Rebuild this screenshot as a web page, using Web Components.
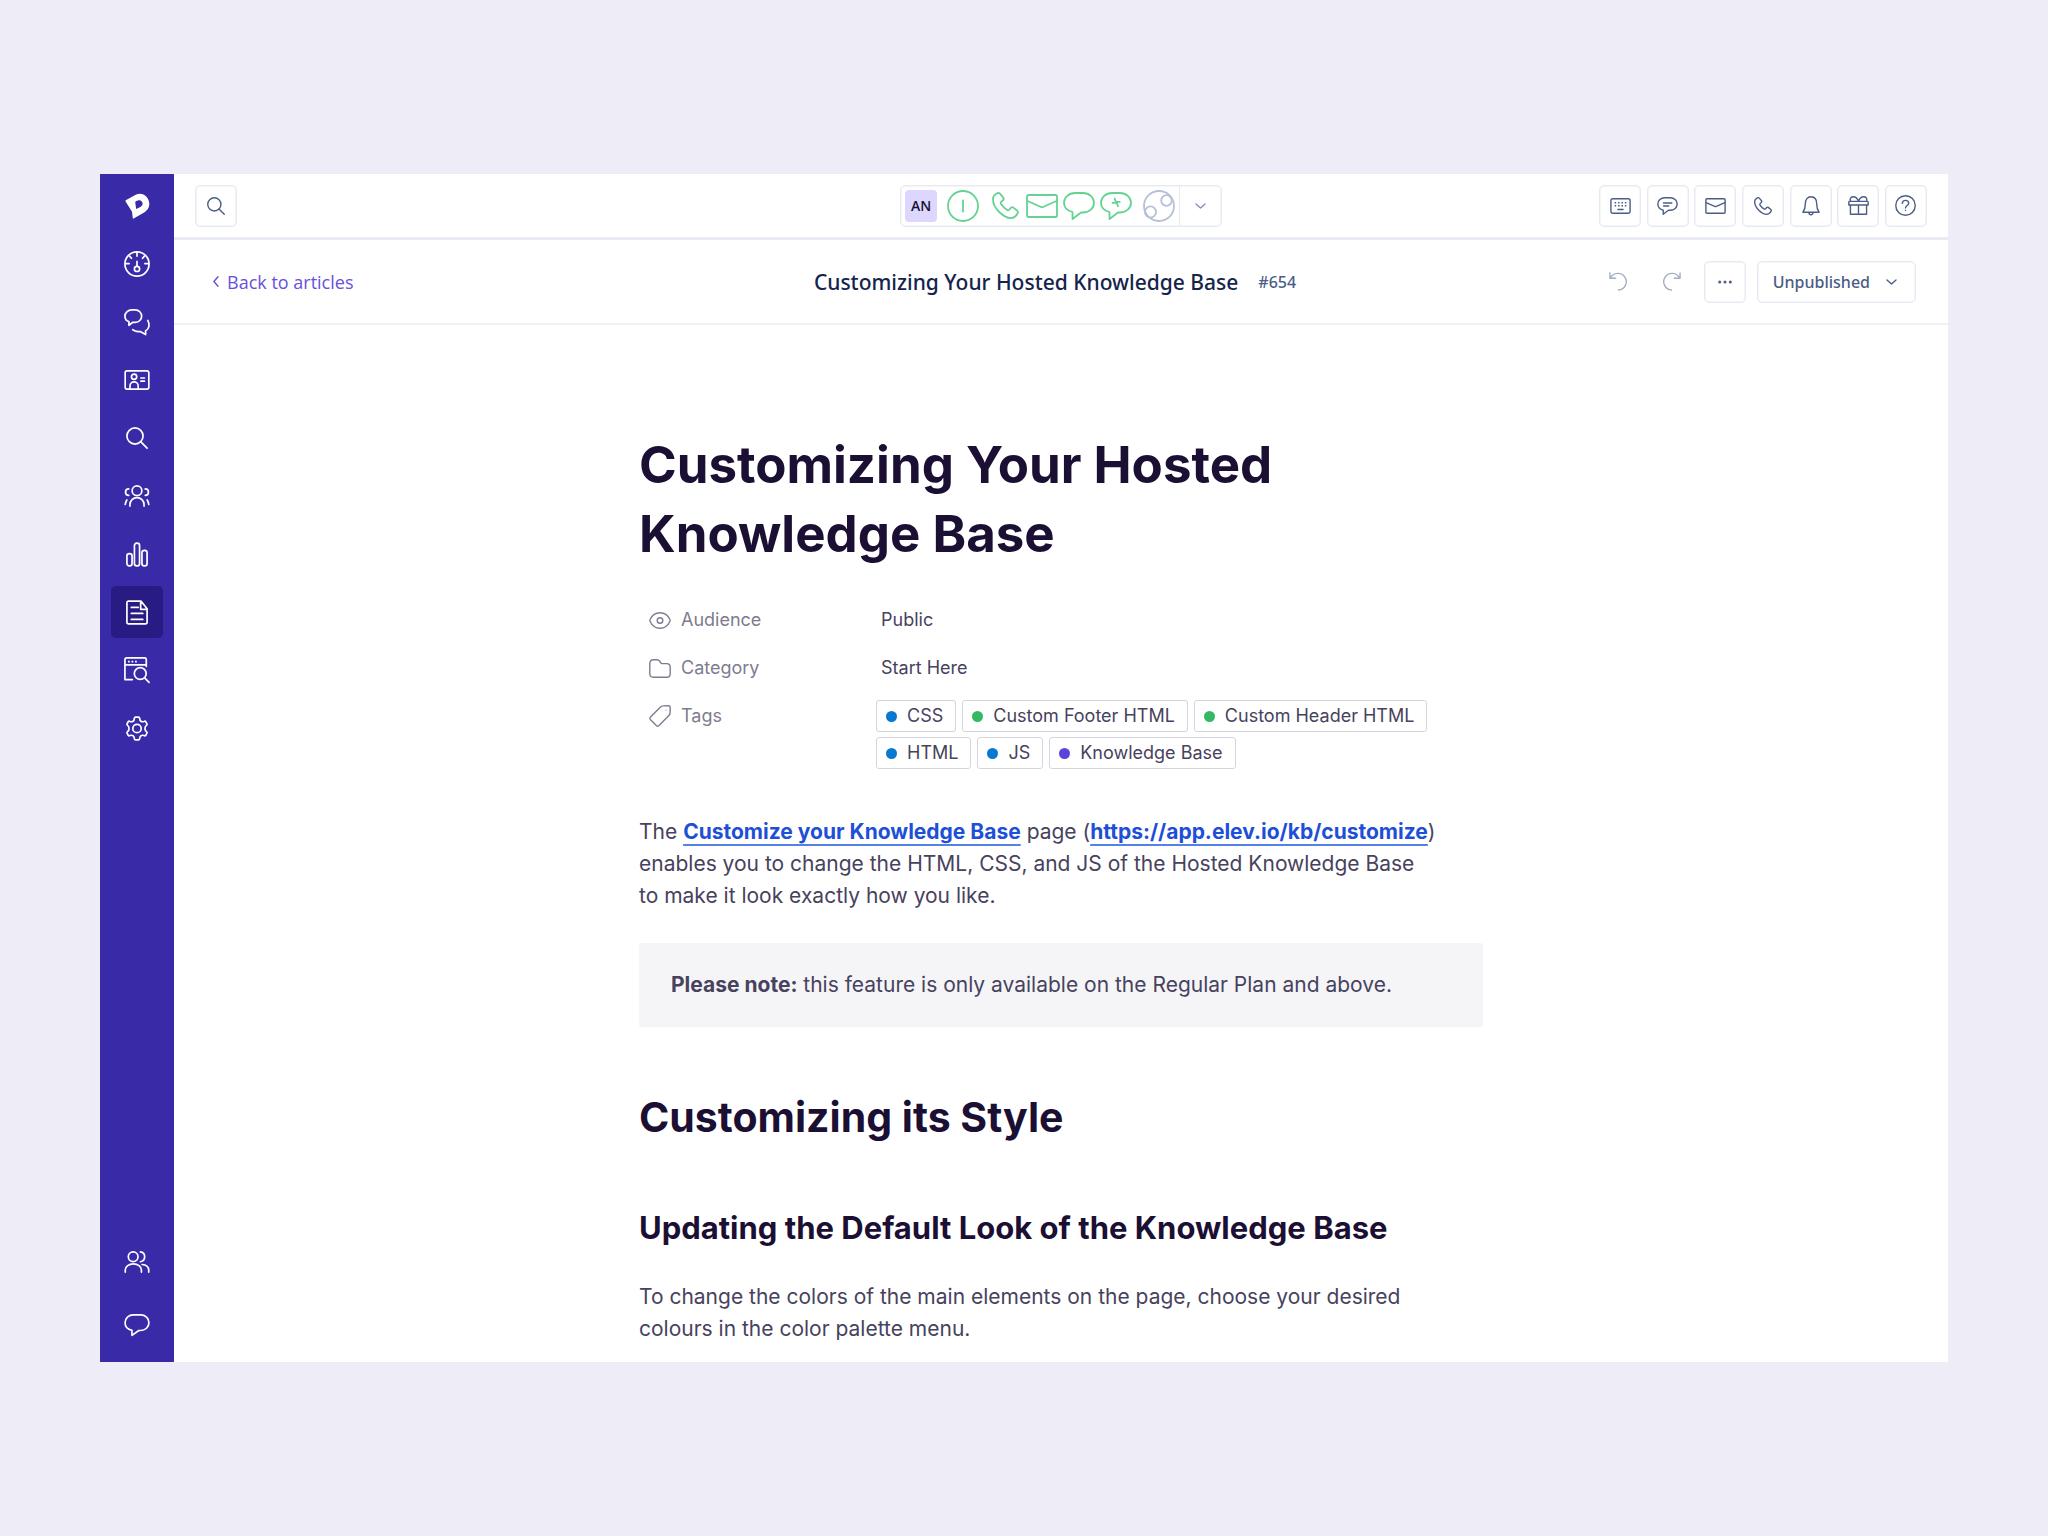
<!DOCTYPE html>
<html lang="en">
<head>
<meta charset="utf-8">
<title>Customizing Your Hosted Knowledge Base</title>
<style>
  html, body { height: 100%; }
  body {
    margin: 0; box-sizing: border-box; background: #eeecf7;
    padding: 174px 100px; font-family: Inter, sans-serif; color: #47425d;
    --line: #e7eaf3; --ink: #1b1033; --slate: #4b5d85; --brand: #392ba8;
  }
</style>
</head>
<body>
<kb-app></kb-app>

<script>
const ICONS = {
  logo: ['0 0 26 28', '<path fill="currentColor" stroke="none" fill-rule="evenodd" d="M.8 7.6 11.6 1.4C18.5-1.400 25.200 3.900 25.300 11.200C25.300 15.600 22.800 18.800 19 20.800L9 26.600Q8.300 27 8.100 26.200L7.300 19.400L.6 8.800Q.2 8 .8 7.600ZM10.600 9.200L11.600 16.500L16 14.600C18.500 13.300 19 10.800 17.500 8.900C16 7 13.300 7.300 10.600 9.200Z"/>'],
  gauge: ['0 0 28 28', '<circle cx="14" cy="14" r="13"/><path d="M14 1.500v4M1.500 13.500h4M22.500 13.500h4M6 5.500 8 7.800M22 5.500 20 7.800M14 11.200v5"/><circle cx="14" cy="19.300" r="2.800"/>'],
  chats: ['0 0 28 28', '<path d="M8.500 1h3.800C16 1 19 4 19 7.700s-3 6.600-6.700 6.600H9.500L5.300 17.500v-4C2.700 12.700 1 10.500 1 7.700 1 4 4 1 8.500 1Z"/><path d="M25.600 12.300c2.500 4.300 1.700 9-2.300 11.200v4l-5.900-3.200c-2.800.2-4 .1-6-.9-.7-.5-1.300-.8-2-1.100"/>'],
  card: ['0 0 28 22', '<rect x="1" y="1" width="26" height="20" rx="2"/><circle cx="10.800" cy="7.500" r="2.900"/><path d="M6.300 20.500v-3a4.500 4.500 0 0 1 9 0v3M18.200 8.800h4M18.200 12.300h4"/>'],
  search: ['0 0 24 24', '<circle cx="9.800" cy="9.800" r="8.800"/><path d="m16 16 7 7"/>'],
  team: ['0 0 28 24', '<circle cx="14" cy="6.300" r="5.300"/><path d="M6.300 23v-1.500a7.700 7.700 0 0 1 15.400 0V23M5 4.300a3.300 3.300 0 0 0 0 7M23 4.300a3.300 3.300 0 0 1 0 7M1.200 21.300c.2-2 .7-3.500 1.700-5M26.800 21.300c-.2-2-.7-3.500-1.700-5"/>'],
  bars: ['0 0 24 27', '<rect x="1" y="12.500" width="5.600" height="13.500" rx="2.600"/><rect x="9.200" y="1" width="5.600" height="25" rx="2.600"/><rect x="17.400" y="9" width="5.600" height="17" rx="2.600"/>'],
  doc: ['0 0 24 27', '<path d="M2.700 1h13.600L23 9.500v14.800a1.700 1.700 0 0 1-1.700 1.700H2.700A1.700 1.700 0 0 1 1 24.300V2.700A1.700 1.700 0 0 1 2.700 1ZM16 1v9h7M5.800 8h7.500M5.800 14.500h12.500M5.800 21h12.500"/>'],
  browse: ['0 0 28 28', '<path d="M9 24.300H1V3A2 2 0 0 1 3 1h19a2 2 0 0 1 2 2v7M1 8.500h23"/><path stroke-linecap="butt" stroke-dasharray="1.900 1.900" d="M4.300 5h9.500"/><circle cx="17.500" cy="17.800" r="6.400"/><path d="m22.200 22.500 4.800 4.800"/>'],
  gear: ['0 0 24 27', '<circle cx="12" cy="13.500" r="4.600"/><path d="M10.500 1h3c1 0 1.300.6 1.400 1.500.2 3 2.100 4.300 4.700 3.300.8-.4 1.600-.3 2 .3l1.100 2c.5.800.3 1.500-.4 2-2.200 1.700-2.200 5.100 0 6.800.7.500.9 1.200.4 2l-1.100 2c-.4.600-1.200.7-2 .3-2.600-1-4.500.3-4.700 3.300-.1.900-.4 1.500-1.400 1.500h-3c-1 0-1.300-.6-1.400-1.500-.2-3-2.100-4.300-4.700-3.300-.8.400-1.600.3-2-.3l-1.100-2c-.5-.8-.3-1.500.4-2 2.200-1.700 2.200-5.100 0-6.800-.7-.5-.9-1.200-.4-2l1.100-2c.4-.6 1.200-.7 2-.3 2.600 1 4.500-.3 4.700-3.300C9.200 1.600 9.500 1 10.500 1Z"/>'],
  people: ['0 0 28 24', '<circle cx="9.800" cy="6.300" r="5.300"/><path d="M1.200 23v-2.500a8.800 6.500 0 0 1 17.600 0V23M17.700 1a5.400 5.400 0 0 1 0 10.700M19.500 14.700c4.800.3 7.300 2.800 7.300 6.300v2"/>'],
  chat: ['0 0 28 24', '<path d="M10 1h8c5 0 9 3.700 9 8.500S23 18 18 18h-2l-7.500 5.300v-5.500C4 16.800 1 13.700 1 9.500 1 4.700 5 1 10 1Z"/>'],
  active: ['0 0 32 32', '<circle cx="16" cy="16" r="15"/><path d="M16 10.500v11"/>'],
  phone: ['0 0 28 28', '<path d="M4 2 6 1.100c.9-.4 1.600-.1 2.200.6l3.500 4.200c.7.900.6 1.700-.1 2.400L9.700 10c-.8.800-.9 1.600-.3 2.500 1.600 2.400 3.600 4.400 6.100 6 .9.600 1.700.5 2.500-.3l1.800-1.900c.7-.7 1.500-.8 2.400-.1l4 3.300c.8.700 1 1.500.5 2.300C25.300 24.500 23 27 19.500 27 13 27 1 17.500 1 7.500 1 5 2 3.200 4 2Z"/>'],
  mail: ['0 0 32 24', '<rect x="1" y="1" width="30" height="22" rx="1.600"/><path d="m1.500 7 13.500 6q1 .5 2 0L30.500 7"/>'],
  bubble: ['0 0 32 28', '<path d="M12 1h8c6.200 0 11 4.300 11 9.700s-4.800 9.800-11 9.800h-2L9.500 27v-7C4.400 18.700 1 15.200 1 10.700 1 5.300 5.800 1 12 1Z"/>'],
  swap: ['0 0 32 28', '<path d="M12 1h8c6.200 0 11 4.300 11 9.700s-4.800 9.800-11 9.800h-2L9.500 27v-7C4.400 18.700 1 15.200 1 10.700 1 5.300 5.800 1 12 1Z"/><path d="M12.500 10.800h3.800L14.600 6.500M19.800 9.800h-3.600L18 14.200"/>'],
  globe: ['0 0 32 32', '<circle cx="16" cy="16" r="15"/><circle cx="23.500" cy="10.500" r="5.300"/><circle cx="7.500" cy="22" r="5.600"/>'],
  down: ['0 0 11 6', '<path d="m1 1 4.500 4L10 1"/>'],
  left: ['0 0 6 11', '<path d="M5 .8.900 5.500 5 10.200"/>'],
  keys: ['0 0 22 17', '<rect x=".8" y=".8" width="20.400" height="15.400" rx="2"/><path stroke-linecap="butt" stroke-dasharray="1.600 2" d="M4.800 5h12.400M4.800 8.300h12.400"/><path d="M8.300 12.200h5.400"/>'],
  note: ['0 0 22 19', '<path d="M8 .8h6c4 0 7.200 2.900 7.200 6.600S18 14 14 14h-2l-5.500 4.200V14C3 13 .8 10.700.8 7.400.8 3.700 4 .8 8 .8ZM6.800 6.300h8.800M6.800 9.500h5.500"/>'],
  envelope: ['0 0 22 17', '<rect x=".8" y=".8" width="20.400" height="15.400" rx="1"/><path d="m1 5 9.200 4q.8.400 1.600 0L21 5"/>'],
  bell: ['0 0 20 22', '<path d="M1 18c2.300-3 2.700-5 2.700-9.500C3.700 3.700 6.200.8 10 .8s6.300 2.900 6.300 7.700c0 4.500.4 6.500 2.700 9.500ZM7.800 18.500a2.200 2.200 0 0 0 4.400 0"/>'],
  gift: ['0 0 22 20', '<path d="M1.600 5.700h18.800a.8.800 0 0 1 .8.800v3H.8v-3a.8.800 0 0 1 .8-.8ZM2.500 9.500v9.700h17V9.500M11 9.500v9.700M2.500 5.500C1.500 2.500 3.300.8 5.500.8c2.500 0 4.500 2 5.500 4.500C12 2.800 14 .8 16.500.8c2.200 0 4 1.700 3 4.700"/>'],
  help: ['0 0 22 22', '<circle cx="11" cy="11" r="10.200"/><path d="M7.700 8.800c0-2 1.400-3.200 3.300-3.200 2 0 3.400 1.200 3.400 3 0 2.300-3.400 2.600-3.400 4.900M11 15.900v.1"/>'],
  undo: ['0 0 20 20', '<path d="M1 1v5.500h6M1.500 6.300A8.800 8.800 0 1 1 10 19"/>'],
  redo: ['0 0 20 20', '<path d="M19 1v5.500h-6M18.500 6.300A8.800 8.800 0 1 0 10 19"/>'],
  dots: ['0 0 14 4', '<g fill="currentColor" stroke="none"><circle cx="1.700" cy="2" r="1.500"/><circle cx="7" cy="2" r="1.500"/><circle cx="12.300" cy="2" r="1.500"/></g>'],
  eye: ['0 0 22 17', '<path d="M1.100 9.500q-.5-1 0-2C3 3.500 6.600.8 11 .8s8 2.700 9.900 6.700q.5 1 0 2C19 13.500 15.400 16.200 11 16.200S3 13.500 1.100 9.500Z"/><circle cx="11" cy="8.500" r="2.800"/>'],
  folder: ['0 0 22 19', '<path d="M4.500.8h3.300c1.500 0 2.300.4 3 1.600l.6 1c.5.900 1 1.200 2 1.200h4.300c2.300 0 3.500 1.200 3.500 3.500v6.600c0 2.300-1.200 3.500-3.500 3.500H4.300C2 18.200.8 17 .8 14.700V4.500C.8 2 2 .8 4.500.8Z"/>'],
  tag: ['0 0 22 22', '<path d="m1.300 12.200 9.900-9.900Q12.600 1 14.500.9l5-.1q1.700 0 1.700 1.700l-.1 5q0 1.900-1.400 3.300l-9.900 9.900q-1.100 1-2.200 0l-6.300-6.300q-1-1.100 0-2.200Z"/><path stroke-width="1" d="M17 5h.1"/>']
};

function define(name, css, html) {
  customElements.define(name, class extends HTMLElement {
    constructor() {
      super();
      const t = document.createElement('template');
      t.innerHTML = `<style>*{box-sizing:border-box}${css}</style>${html(this)}`;
      this.attachShadow({ mode: 'open' }).append(t.content.cloneNode(true));
    }
  });
}

/* Line icon: name picks the drawing, w its width, sw the stroke in px. */
define('kb-icon', `
  :host { display: inline-flex; flex: none; }
  svg { display: block; fill: none; stroke: currentColor; stroke-linecap: round; stroke-linejoin: round; }`,
  el => {
    const [box, body] = ICONS[el.getAttribute('name')];
    const [, , w, h] = box.split(' ').map(Number);
    const width = Number(el.getAttribute('w')) || w;
    const sw = (Number(el.getAttribute('sw')) || 1.4) * w / width;
    return `<svg viewBox="${box}" width="${width}" height="${Math.round(h * width / w)}" stroke-width="${sw}" overflow="visible" aria-hidden="true">${body}</svg>`;
  });

define('kb-nav-item', `
  :host { display: block; }
  a { display: flex; align-items: center; justify-content: center; width: 52px; height: 52px; border-radius: 5px; color: #fff; }
  :host([active]) a { background: #281b83; }`,
  el => `<a href="#" aria-label="${el.getAttribute('label')}"><slot></slot></a>`);

define('kb-sidebar', `
  :host { display: flex; flex-direction: column; align-items: center; flex: none; width: 74px; background: var(--brand); color: #fff; padding-bottom: 11px; }
  .logo { display: flex; align-items: center; justify-content: center; height: 64px; }
  nav, .foot { display: flex; flex-direction: column; gap: 6px; }
  .foot { margin-top: auto; gap: 11px; }`,
  () => {
    const item = ([icon, label, w, on]) => `<kb-nav-item label="${label}" ${on ? 'active' : ''}><kb-icon name="${icon}" w="${w}" sw="1.7"></kb-icon></kb-nav-item>`;
    const main = [['gauge', 'Dashboard', 26], ['chats', 'Conversations', 26], ['card', 'Contacts', 26], ['search', 'Search', 22], ['team', 'Team', 26], ['bars', 'Reports', 22], ['doc', 'Articles', 22, 1], ['browse', 'Explore', 26], ['gear', 'Settings', 22]];
    return `<div class="logo"><kb-icon name="logo" w="25"></kb-icon></div>
      <nav aria-label="Main">${main.map(item).join('')}</nav>
      <div class="foot">${[['people', 'Agents', 26], ['chat', 'Chat', 26]].map(item).join('')}</div>`;
  });

define('kb-button', `
  :host { display: block; flex: none; color: var(--slate); }
  button { display: flex; align-items: center; justify-content: center; gap: 16px; min-width: 42px; height: 42px; padding: 0; margin: 0;
    background: #fff; border: 1px solid var(--line); border-radius: 5px; color: inherit; font: 500 16px "Noto Sans", "Open Sans", sans-serif; box-shadow: inset 0 0 0 1px #f3f5f9; }
  :host([wide]) button { padding: 0 18px 0 15px; }
  :host([bare]) button { border-color: transparent; box-shadow: none; color: #a3aec4; }`,
  el => `<button type="button" ${el.hasAttribute('label') ? `aria-label="${el.getAttribute('label')}"` : ''}><slot></slot></button>`);

define('kb-status', `
  :host { display: flex; width: 322px; height: 42px; border: 1px solid var(--line); border-radius: 5px; box-shadow: inset 0 0 0 1px #f3f5f9; color: #64d392; }
  .set { flex: 1; display: flex; align-items: center; padding: 0 4px; }
  .who { display: flex; align-items: center; justify-content: center; width: 32px; height: 32px; border-radius: 4px; background: #ddd7ff; color: var(--ink); font: 600 14px "Open Sans", sans-serif; margin-right: 10px; }
  .call { margin: 0 7px 0 13px; }
  .chats { display: flex; gap: 5px; margin: 0 11px 0 5px; }
  .web { color: #b5c1d8; }
  button { width: 42px; height: 40px; padding: 0; background: none; border: 0; border-left: 1px solid var(--line); color: #8492b4; display: flex; align-items: center; justify-content: center; }`,
  () => `<div class="set"><span class="who">AN</span>
    <kb-icon name="active" w="32" sw="1.8"></kb-icon>
    <kb-icon class="call" name="phone" w="27" sw="1.8"></kb-icon>
    <kb-icon name="mail" w="32" sw="1.8"></kb-icon>
    <span class="chats"><kb-icon name="bubble" w="32" sw="1.8"></kb-icon><kb-icon name="swap" w="32" sw="1.8"></kb-icon></span>
    <kb-icon class="web" name="globe" w="32" sw="1.8"></kb-icon></div>
    <button type="button" aria-label="Change status"><kb-icon name="down" w="11"></kb-icon></button>`);

define('kb-topbar', `
  :host { display: grid; grid-template-columns: 1fr auto 1fr; align-items: center; height: 66px; padding: 0 21px; border-bottom: 3px solid #e8ebf3; }
  .tools { justify-self: end; display: flex; justify-content: space-between; width: 328px; }`,
  () => `<kb-button label="Search"><kb-icon name="search" w="18"></kb-icon></kb-button>
    <kb-status></kb-status>
    <div class="tools">${[['keys', 'Keyboard'], ['note', 'Notes'], ['envelope', 'Mail'], ['phone', 'Call', 18], ['bell', 'Notifications', 18], ['gift', 'News'], ['help', 'Help']]
      .map(([i, l, w]) => `<kb-button label="${l}"><kb-icon name="${i}" w="${w || 21}"></kb-icon></kb-button>`).join('')}</div>`);

define('kb-titlebar', `
  :host { display: grid; grid-template-columns: 1fr auto 1fr; align-items: center; height: 85px; padding: 0 32px 0 20px; border-bottom: 2px solid #f0f1f7; font-family: "Open Sans", sans-serif; }
  a { display: inline-flex; align-items: center; gap: 8px; padding-left: 19px; color: #6a4fdb; font-size: 18px; text-decoration: none; }
  .title { display: flex; align-items: center; gap: 20px; color: #14244c; font-family: "Noto Sans", "Open Sans", sans-serif; font-size: 21px; font-weight: 500; white-space: nowrap; }
  .num { font-size: 16px; color: var(--slate); }
  .actions { justify-self: end; display: flex; gap: 11px; }`,
  () => `<div><a href="#"><kb-icon name="left" w="6"></kb-icon>Back to articles</a></div>
    <div class="title"><span>Customizing Your Hosted Knowledge Base</span><span class="num">#654</span></div>
    <div class="actions">
      <kb-button bare label="Undo"><kb-icon name="undo" w="19"></kb-icon></kb-button>
      <kb-button bare label="Redo"><kb-icon name="redo" w="19"></kb-icon></kb-button>
      <kb-button label="More"><kb-icon name="dots" w="14"></kb-icon></kb-button>
      <kb-button wide>Unpublished<kb-icon name="down" w="11"></kb-icon></kb-button>
    </div>`);

define('kb-tag', `
  :host { display: inline-flex; align-items: center; gap: 10px; height: 32px; padding: 0 12px 0 9px; border: 1px solid #d6d4de; border-radius: 3px; white-space: nowrap; }
  i { width: 11px; height: 11px; border-radius: 50%; background: var(--dot); }`,
  () => `<i></i><span><slot></slot></span>`);

define('kb-field', `
  :host { display: grid; grid-template-columns: 227px 1fr; font-size: 18px; line-height: 32px; }
  .label { display: flex; align-items: center; gap: 10px; height: 32px; color: #7f7b90; }
  .value { padding-left: 5px; }
  :host([tags]) .value { display: flex; flex-wrap: wrap; gap: 5px 6px; padding: 0; }`,
  el => `<div class="label"><kb-icon name="${el.getAttribute('icon')}" w="22"></kb-icon>${el.getAttribute('label')}</div><div class="value"><slot></slot></div>`);

define('kb-note', `
  :host { display: block; padding: 26px 32px; background: #f5f5f8; border-radius: 3px; }`,
  () => `<slot></slot>`);

define('kb-article', `
  :host { display: block; width: 100%; max-width: 844px; margin: 0 auto; padding-top: 105px; font-size: 21px; line-height: 32px; }
  h1, h2, h3 { margin: 0; color: var(--ink); font-weight: 700; }
  h1 { font-size: 51px; line-height: 69px; max-width: 740px; }
  h2 { font-size: 41px; line-height: 56px; margin-top: 62px; }
  h3 { font-size: 31px; line-height: 42px; margin-top: 62px; }
  p { margin: 0; max-width: 810px; }
  .meta { display: flex; flex-direction: column; gap: 16px; margin: 36px 0 47px; padding-left: 10px; }
  .last { margin-top: 32px; }
  kb-note { margin-top: 31px; }
  a { color: #1d4fd7; font-weight: 700; text-decoration: underline 2px #5580e6; text-underline-offset: 5px; text-decoration-skip-ink: none; }`,
  () => `<h1>Customizing Your Hosted Knowledge Base</h1>
    <div class="meta">
      <kb-field icon="eye" label="Audience">Public</kb-field>
      <kb-field icon="folder" label="Category">Start Here</kb-field>
      <kb-field icon="tag" label="Tags" tags>
        <kb-tag style="--dot:#0878d1">CSS</kb-tag><kb-tag style="--dot:#34b864">Custom Footer HTML</kb-tag><kb-tag style="--dot:#34b864">Custom Header HTML</kb-tag><kb-tag style="--dot:#0878d1">HTML</kb-tag><kb-tag style="--dot:#0878d1">JS</kb-tag><kb-tag style="--dot:#5c42dc">Knowledge Base</kb-tag>
      </kb-field>
    </div>
    <p>The <a href="#">Customize your Knowledge Base</a> page (<a href="#">https://app.elev.io/kb/customize</a>) enables you to change the HTML, CSS, and JS of the Hosted Knowledge Base to&nbsp;make it look exactly how you like.</p>
    <kb-note><b>Please note:</b> this feature is only available on the Regular Plan and above.</kb-note>
    <h2>Customizing its Style</h2>
    <h3>Updating the Default Look of the Knowledge Base</h3>
    <p class="last">To change the colors of the main elements on the page, choose your desired colours in the color palette menu.</p>`);

define('kb-app', `
  :host { display: flex; height: 100%; background: #fff; overflow: hidden; }
  main { flex: 1; min-width: 0; }`,
  () => `<kb-sidebar></kb-sidebar><main><kb-topbar></kb-topbar><kb-titlebar></kb-titlebar><kb-article></kb-article></main>`);
</script>
</body>
</html>
